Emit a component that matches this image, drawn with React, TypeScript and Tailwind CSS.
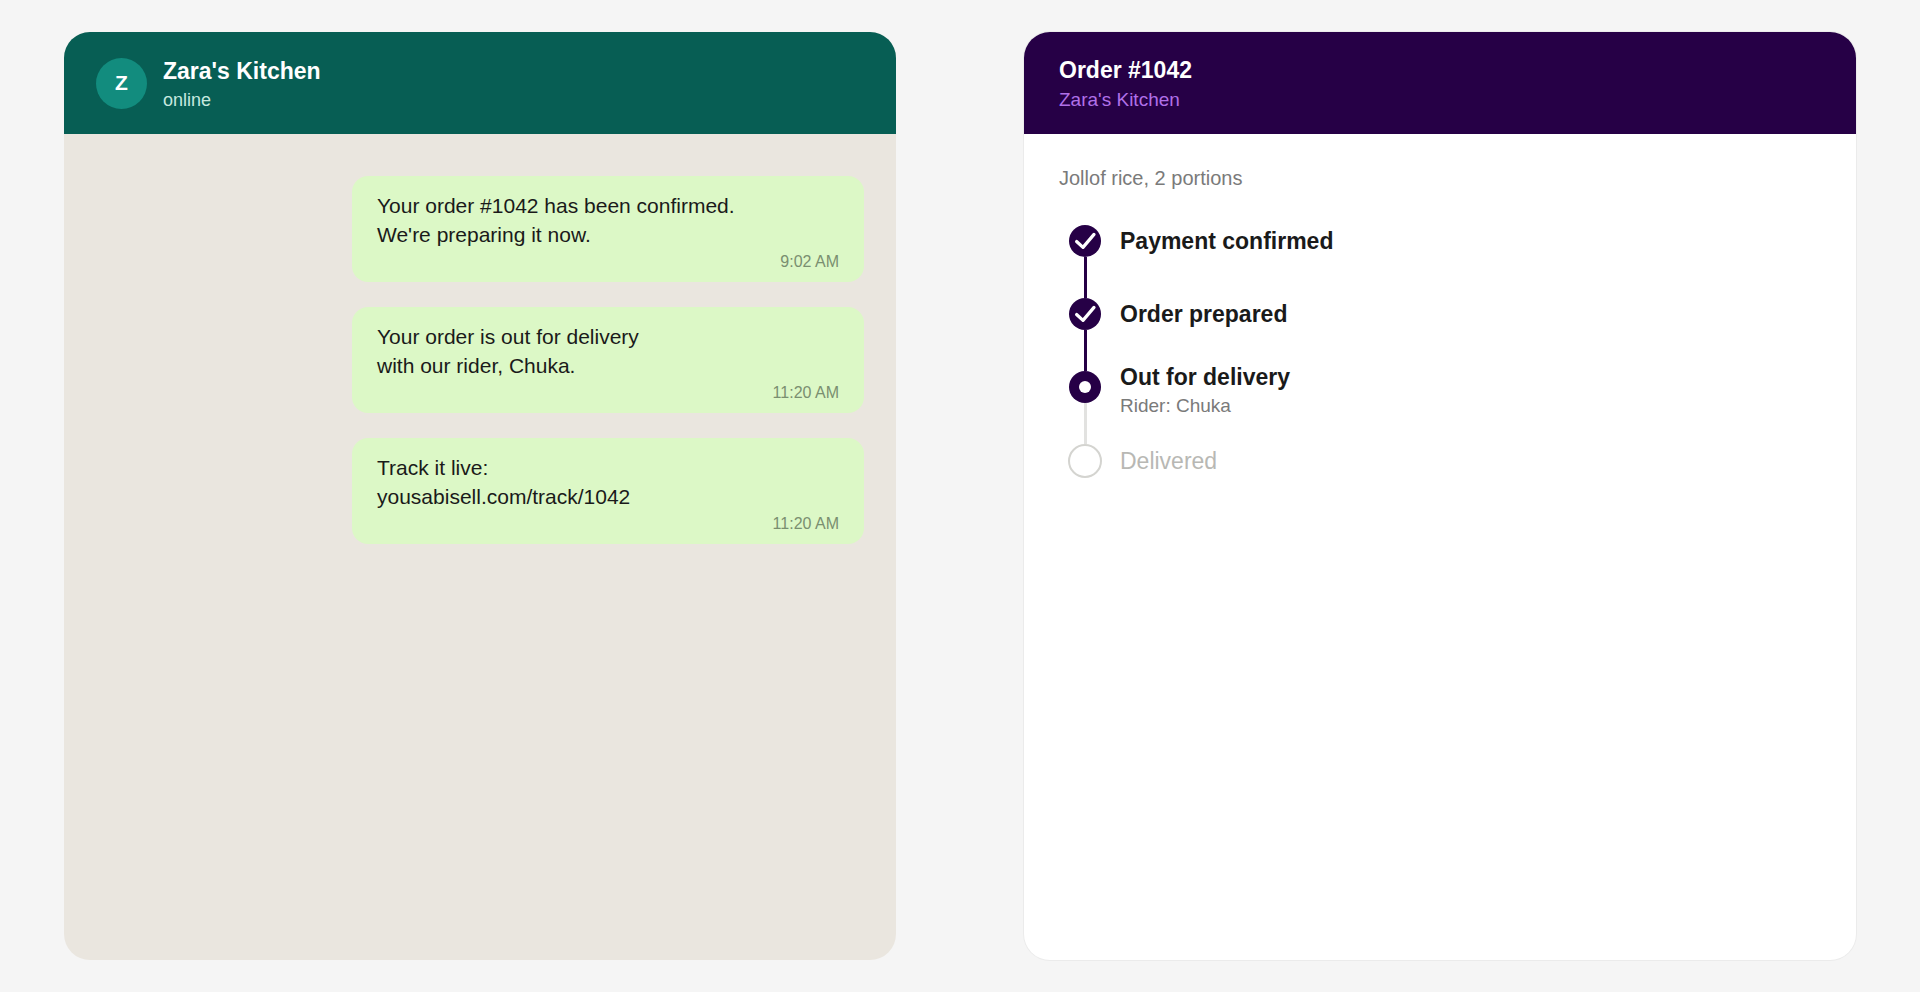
import React from 'react'

type Message = {
    lines: Array<string>
    time: string
}

type Step = {
    label: string
    note?: string
    state: "done" | "current" | "pending"
}

const messages: Array<Message> = [
    { lines: ["Your order #1042 has been confirmed.", "We're preparing it now."], time: "9:02 AM" },
    { lines: ["Your order is out for delivery", "with our rider, Chuka."], time: "11:20 AM" },
    { lines: ["Track it live:", "yousabisell.com/track/1042"], time: "11:20 AM" },
]

const steps: Array<Step> = [
    { label: "Payment confirmed", state: "done" },
    { label: "Order prepared", state: "done" },
    { label: "Out for delivery", note: "Rider: Chuka", state: "current" },
    { label: "Delivered", state: "pending" },
]

function StepMarker({ state }: { state: Step["state"] }) {
    if (state == "pending") {
        return <div className="size-[34px] shrink-0 rounded-full border-2 border-[#d4d4d0] bg-white" />
    }
    return (
        <div className="flex size-8 shrink-0 items-center justify-center rounded-full bg-[#260046]">
            {state == "done" ? (
                <svg className="size-8" viewBox="0 0 32 32" fill="none" stroke="white" strokeWidth="3.2" strokeLinecap="round" strokeLinejoin="round" aria-hidden="true">
                    <path d="M7.6 16.5 L14 22.4 L25 9.4" />
                </svg>
            ) : (
                <div className="size-3 rounded-full bg-white" />
            )}
        </div>
    )
}

function ChatPanel() {
    return (
        <section className="flex flex-1 flex-col overflow-hidden rounded-[26px] bg-[#eae6df]">
            <header className="flex h-[102px] items-center gap-4 bg-[#075e54] px-8">
                <div className="flex size-[51px] items-center justify-center rounded-full bg-[#128c7e] text-[21px] font-bold text-white">Z</div>
                <div className="pt-1">
                    <h2 className="text-[23px] leading-[30px] font-bold text-white">Zara's Kitchen</h2>
                    <p className="text-[18px] leading-7 text-[#c5e8df]">online</p>
                </div>
            </header>
            <ul className="flex flex-col items-end gap-[25px] px-8 pt-[42px]">
                {messages.map((m) => (
                    <li key={m.lines[0]} className="w-2/3 max-w-[512px] rounded-2xl bg-[#dcf8c6] px-[25px] pt-[15px] pb-2 text-[21px] leading-[29px] text-[#1a1a1a]">
                        {m.lines.map((l) => (
                            <p key={l}>{l}</p>
                        ))}
                        <p className="text-right text-[16px] leading-[25px] text-[#7a8f70]">{m.time}</p>
                    </li>
                ))}
            </ul>
        </section>
    )
}

function TrackingPanel() {
    return (
        <section className="flex flex-1 flex-col overflow-hidden rounded-[26px] bg-white shadow-[0_0_0_1px_#ebebeb]">
            <header className="flex h-[102px] flex-col justify-center bg-[#260046] px-[35px] pt-1">
                <h2 className="text-[23px] leading-[30px] font-bold text-white">Order #1042</h2>
                <p className="text-[19px] leading-[30px] text-[#b070e8]">Zara's Kitchen</p>
            </header>
            <div className="px-[35px] pt-[30px]">
                <p className="text-[20px] leading-[29px] text-[#7a7a7a]">Jollof rice, 2 portions</p>
                <ol className="mt-8 ml-[9px]">
                    {steps.map((s, i) => (
                        <li key={s.label} className={i < steps.length - 1 ? "flex h-[73px] gap-[18px]" : "flex gap-[18px]"}>
                            <div className="flex w-[34px] flex-col items-center">
                                <StepMarker state={s.state} />
                                {i < steps.length - 1 && (
                                    <div className={s.state == "done" ? "w-[3px] flex-1 bg-[#260046]" : "w-[3px] flex-1 bg-[#e2e2e0]"} />
                                )}
                            </div>
                            <div className={s.note ? "-mt-2" : ""}>
                                <p className={
                                    s.state == "pending" ? "text-[23px] leading-[34px] text-[#b8b8b4]"
                                    : s.note ? "text-[23px] leading-7 font-bold text-[#1a1a1a]"
                                    : "text-[23px] leading-8 font-bold text-[#1a1a1a]"
                                }>{s.label}</p>
                                {s.note && <p className="text-[19px] leading-[30px] text-[#7a7a7a]">{s.note}</p>}
                            </div>
                        </li>
                    ))}
                </ol>
            </div>
        </section>
    )
}

export default function App() {
    return (
        <main className="flex min-h-screen gap-32 bg-[#f5f5f5] px-16 py-8 font-['Liberation_Sans',Arial,sans-serif]">
            <ChatPanel />
            <TrackingPanel />
        </main>
    )
}
